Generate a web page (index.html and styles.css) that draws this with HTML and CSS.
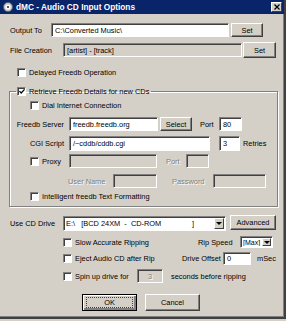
FILE: index.html
```html
<!DOCTYPE html>
<html lang="en">
<head>
    <meta charset="UTF-8">
    <title>dMC - Audio CD Input Options</title>
    <link rel="stylesheet" href="styles.css">
</head>
<body>
    <div class="window">
        <div class="titlebar">
            <svg class="app-icon" width="10" height="10" viewBox="0 0 10 10">
                <circle cx="5" cy="5" r="4.5" fill="#c8c8c8" stroke="#606060" stroke-width="0.6"/>
                <circle cx="5" cy="5" r="2.6" fill="#ffffff"/>
                <circle cx="5" cy="5" r="1.1" fill="#303030"/>
            </svg>
            <span class="title">dMC - Audio CD Input Options</span>
            <div class="close-btn">
                <svg width="6" height="6" viewBox="0 0 6 6">
                    <path d="M0.5 0.5 L5.5 5.5 M5.5 0.5 L0.5 5.5" stroke="#000" stroke-width="1.3"/>
                </svg>
            </div>
        </div>

        <!-- output folder -->
        <div class="row row-output">
            <span class="lbl w-output">Output To</span>
            <div class="field w-path">C:\Converted Music\</div>
            <div class="btn btn-set1">Set</div>
        </div>

        <div class="row row-file">
            <span class="lbl w-file">File Creation</span>
            <div class="field readonly w-pattern">[artist] - [track]</div>
            <div class="btn btn-set2">Set</div>
        </div>

        <div class="row row-delayed">
            <span class="check"></span>
            <span class="lbl cb-text">Delayed Freedb Operation</span>
        </div>

        <!-- freedb group -->
        <fieldset class="group">
            <legend class="legend">
                <span class="check checked">
                    <svg width="7" height="7" viewBox="0 0 7 7"><path d="M0.5 3 L2.6 5.2 L6.5 1" fill="none" stroke="#000" stroke-width="1.5"/></svg>
                </span>
                <span class="lbl cb-text">Retrieve Freedb Details for new CDs</span>
            </legend>

            <div class="row row-dial">
                <span class="check"></span>
                <span class="lbl cb-text2">Dial Internet Connection</span>
            </div>

            <div class="row row-server">
                <span class="lbl right w-srvlbl">Freedb Server</span>
                <div class="field w-server">freedb.freedb.org</div>
                <div class="btn btn-select">Select</div>
                <span class="lbl w-port">Port</span>
                <div class="field w-portin">80</div>
            </div>

            <div class="row row-cgi">
                <span class="lbl right w-srvlbl">CGI Script</span>
                <div class="field w-cgi">/~cddb/cddb.cgi</div>
                <div class="field w-retries">3</div>
                <span class="lbl">Retries</span>
            </div>

            <div class="row row-proxy">
                <span class="check"></span>
                <span class="lbl w-proxylbl">Proxy</span>
                <div class="field disabled w-proxy"></div>
                <span class="lbl off w-pport">Port</span>
                <div class="field disabled w-pportin"></div>
            </div>

            <div class="row row-user">
                <span class="lbl off w-userlbl">User Name</span>
                <div class="field disabled w-user"></div>
                <span class="lbl off w-passlbl">Password</span>
                <div class="field disabled w-pass"></div>
            </div>

            <div class="row row-intel">
                <span class="check"></span>
                <span class="lbl cb-text2">Intelligent freedb Text Formatting</span>
            </div>
        </fieldset>

        <!-- drive options -->
        <div class="row row-drive">
            <span class="lbl w-drivelbl">Use CD Drive</span>
            <div class="combo w-drive">
                <span class="combo-text">E:\&nbsp;&nbsp;&nbsp;[BCD 24XM&nbsp;&nbsp;-&nbsp;&nbsp;CD-ROM&nbsp;&nbsp;&nbsp;&nbsp;&nbsp;&nbsp;&nbsp;&nbsp;&nbsp;&nbsp;&nbsp;&nbsp;&nbsp;&nbsp;&nbsp;]</span>
                <span class="combo-arrow"><span class="tri"></span></span>
            </div>
            <div class="btn btn-adv">Advanced</div>
        </div>

        <div class="row row-slow">
            <span class="check"></span>
            <span class="lbl cb-text3 w-slow">Slow Accurate Ripping</span>
            <span class="lbl w-speedlbl">Rip Speed</span>
            <div class="combo w-speed">
                <span class="combo-text">[Max]</span>
                <span class="combo-arrow"><span class="tri"></span></span>
            </div>
        </div>

        <div class="row row-eject">
            <span class="check"></span>
            <span class="lbl cb-text3 w-eject">Eject Audio CD after Rip</span>
            <span class="lbl w-offlbl">Drive Offset</span>
            <div class="field w-offset">0</div>
            <span class="lbl w-msec">mSec</span>
        </div>

        <div class="row row-spin">
            <span class="check"></span>
            <span class="lbl cb-text3 w-spin">Spin up drive for</span>
            <div class="field disabled w-spinin"><span class="off">3</span></div>
            <span class="lbl w-secs">seconds before ripping</span>
        </div>

        <div class="row row-buttons">
            <div class="btn btn-ok"><span class="focus">OK</span></div>
            <div class="btn btn-cancel">Cancel</div>
        </div>
    </div>
</body>
</html>
```

FILE: styles.css
```css
html, body {
    margin: 0;
    padding: 0;
    background: #d4d0c8;
}
body {
    font-family: "Liberation Sans", Arial, sans-serif;
    font-size: 7.4px;
    color: #000;
}
.window {
    width: 284px;
    height: 317px;
    background: #d4d0c8;
    border-right: 2px solid #404040;
    border-bottom: 2px solid #404040;
    box-shadow: inset -1px -1px #808080;
    overflow: hidden;
}
.titlebar {
    height: 14px;
    background: #0a246a;
    display: flex;
    align-items: center;
    padding-left: 3px;
}
.app-icon {
    margin-right: 3px;
}
.title {
    color: #fff;
    font-weight: bold;
    font-size: 8.3px;
    flex: 1;
}
.close-btn {
    width: 9px;
    height: 8px;
    margin-right: 2px;
    background: #d4d0c8;
    border: 1px solid;
    border-color: #fff #404040 #404040 #fff;
    display: flex;
    align-items: center;
    justify-content: center;
}

.row {
    display: flex;
    align-items: center;
}
.lbl {
    white-space: nowrap;
    line-height: 9px;
}
.right {
    text-align: right;
}
.off {
    color: #808080;
    text-shadow: 1px 1px 0 #fff;
}

/* sunken edit box */
.field {
    box-sizing: border-box;
    height: 14px;
    background: #fff;
    border: 1px solid;
    border-color: #808080 #fff #fff #808080;
    box-shadow: inset 1px 1px #404040;
    padding-left: 3px;
    display: flex;
    align-items: center;
    white-space: nowrap;
    overflow: hidden;
}
.field.readonly,
.field.disabled {
    background: #d4d0c8;
}

/* raised push button */
.btn {
    box-sizing: border-box;
    height: 14px;
    background: #d4d0c8;
    border: 1px solid;
    border-color: #fff #404040 #404040 #fff;
    box-shadow: inset -1px -1px #808080;
    display: flex;
    align-items: center;
    justify-content: center;
    white-space: nowrap;
}

.check {
    box-sizing: border-box;
    width: 9px;
    height: 9px;
    flex: none;
    background: #fff;
    border: 1px solid;
    border-color: #808080 #fff #fff #808080;
    box-shadow: inset 1px 1px #404040;
    display: flex;
    align-items: center;
    justify-content: center;
}
.check svg {
    margin-left: 1px;
    margin-top: 1px;
}

.combo {
    box-sizing: border-box;
    height: 15px;
    background: #fff;
    border: 1px solid;
    border-color: #808080 #fff #fff #808080;
    box-shadow: inset 1px 1px #404040;
    display: flex;
    align-items: center;
    padding: 1px 1px 1px 2px;
}
.combo-text {
    flex: 1;
    white-space: nowrap;
    overflow: hidden;
}
.combo-arrow {
    box-sizing: border-box;
    width: 10px;
    height: 100%;
    background: #d4d0c8;
    border: 1px solid;
    border-color: #fff #404040 #404040 #fff;
    display: flex;
    align-items: center;
    justify-content: center;
}
.tri {
    width: 0;
    height: 0;
    border-left: 3px solid transparent;
    border-right: 3px solid transparent;
    border-top: 3px solid #000;
}

/* rows, top to bottom */
.row-output { margin-top: 9px; height: 14px; padding-left: 10px; }
.w-output { width: 41px; }
.w-path { width: 178px; }
.btn-set1 { width: 32px; margin-left: 2px; }

.row-file { margin-top: 5px; height: 16px; padding-left: 10px; }
.w-file { width: 53px; }
.w-pattern { width: 179px; }
.btn-set2 { width: 33px; height: 16px; margin-left: 1px; }

.row-delayed { margin-top: 10px; height: 9px; padding-left: 17px; }
.cb-text { margin-left: 3px; }

.group {
    margin: 9px 0 0 9px;
    padding: 0 0 5px 0;
    width: 267px;
    border: 1px solid #808080;
    box-shadow: inset 1px 1px #fff, 1px 1px #fff;
}
.legend {
    display: flex;
    align-items: center;
    height: 10px;
    padding: 0 2px 0 1px;
    margin-left: 6px;
}

.row-dial { margin-top: 5px; height: 9px; padding-left: 20px; }
.cb-text2 { margin-left: 3px; }

.row-server { margin-top: 7px; height: 14px; }
.w-srvlbl { width: 54px; margin-right: 5px; }
.w-server { width: 89px; }
.btn-select { width: 32px; margin-left: 2px; }
.w-port { width: 19px; margin-left: 8px; }
.w-portin { width: 23px; }

.row-cgi { margin-top: 5px; height: 15px; }
.row-cgi .field { height: 15px; }
.w-cgi { width: 141px; }
.w-retries { width: 21px; margin-left: 9px; margin-right: 3px; }

.row-proxy { margin-top: 3px; height: 14px; padding-left: 20px; }
.w-proxylbl { width: 27px; margin-left: 3px; }
.w-proxy { width: 88px; }
.w-pport { width: 20px; margin-left: 9px; }
.w-pportin { width: 23px; }

.row-user { margin-top: 6px; height: 14px; padding-left: 58px; }
.w-userlbl { width: 45px; }
.w-user { width: 44px; }
.w-passlbl { width: 41px; margin-left: 15px; }
.w-pass { width: 53px; }

.row-intel { margin-top: 4px; height: 9px; padding-left: 20px; }

.row-drive { margin-top: 8px; height: 16px; padding-left: 10px; }
.w-drivelbl { width: 53px; }
.w-drive { width: 163px; }
.btn-adv { width: 46px; height: 15px; margin-left: 4px; align-self: flex-start; }

.row-slow { margin-top: 5px; height: 12px; padding-left: 63px; }
.cb-text3 { margin-left: 3px; }
.w-slow { width: 123px; }
.w-speedlbl { width: 42px; }
.w-speed { width: 33px; height: 12px; }
.w-speed .combo-text { font-size: 7px; }
.w-speed .combo-arrow { width: 9px; }

.row-eject { margin-top: 4px; height: 13px; padding-left: 63px; }
.row-eject .field { height: 13px; }
.w-eject { width: 107px; }
.w-offlbl { width: 41px; }
.w-offset { width: 28px; }
.w-msec { margin-left: 6px; }

.row-spin { margin-top: 4px; height: 14px; padding-left: 63px; }
.w-spin { width: 62px; }
.w-spinin { width: 26px; justify-content: center; padding-left: 0; }
.w-secs { margin-left: 8px; }

.row-buttons { margin-top: 11px; height: 17px; padding-left: 82px; }
.btn-ok {
    width: 55px;
    height: 17px;
    border-color: #000;
    box-shadow: inset 1px 1px #fff, inset -2px -2px #808080, inset -1px -1px #404040;
}
.btn-ok .focus {
    display: flex;
    align-items: center;
    justify-content: center;
    box-sizing: border-box;
    width: 47px;
    height: 11px;
    border: 1px dotted #404040;
}
.btn-cancel { width: 55px; height: 17px; margin-left: 8px; }
```
